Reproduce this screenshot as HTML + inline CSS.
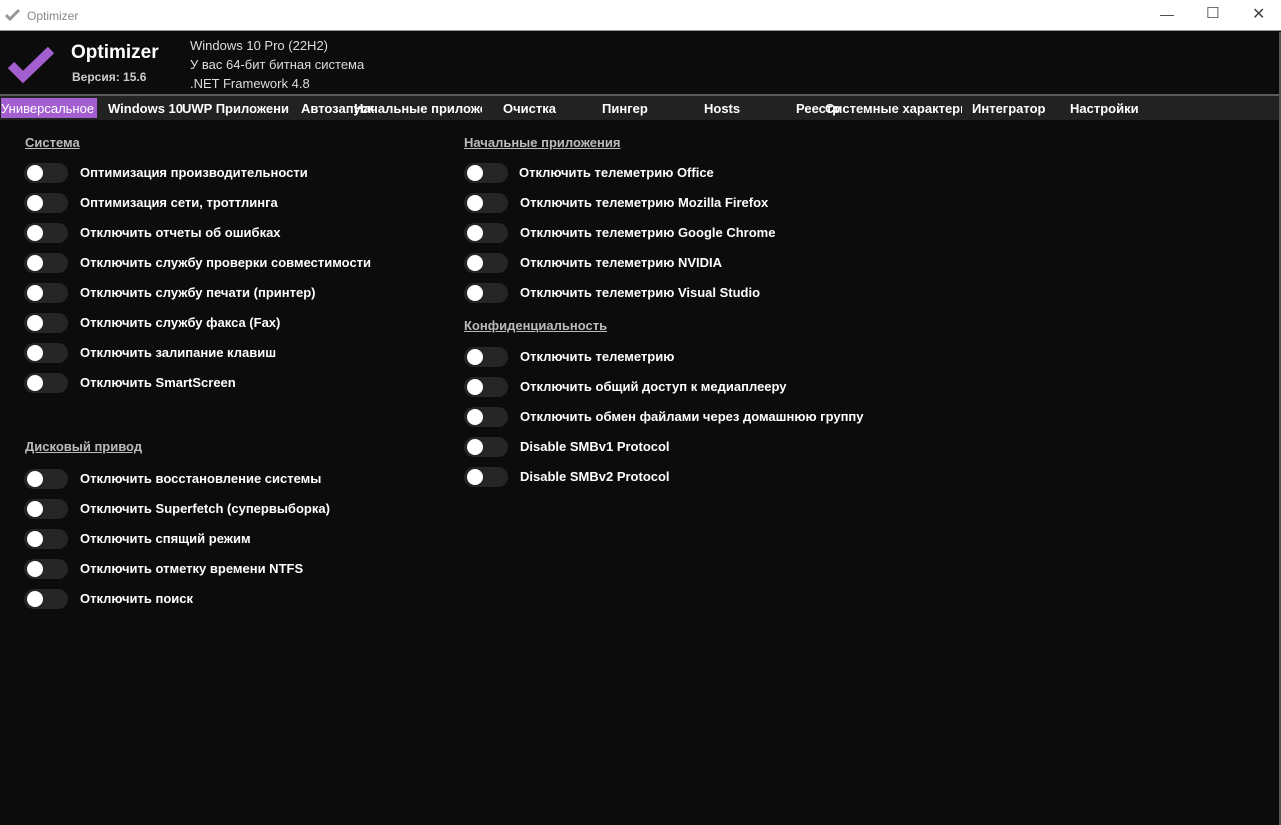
<!DOCTYPE html>
<html><head><meta charset="utf-8"><style>
*{margin:0;padding:0;box-sizing:border-box}
body{width:1281px;height:825px;background:#0c0c0c;font-family:"Liberation Sans","DejaVu Sans",sans-serif;color:#fff;position:relative;overflow:hidden}
.tb{position:absolute;left:0;top:0;width:1281px;height:31px;background:#fff;border-bottom:1px solid #999}
.tb .t{position:absolute;left:27px;top:9px;font-size:12px;color:#888}
.ctl{position:absolute;top:6px;font-size:14px;color:#444}
.hdr{position:absolute;left:0;top:32px;width:1281px;height:62px;background:#0c0c0c}
.gl{position:absolute;left:0;top:94px;width:1281px;height:2px;background:#5a5a5a}
.tabs{position:absolute;left:0;top:96px;width:1280px;height:24px;background:#222}
.tab{position:absolute;top:5px;font-size:13px;font-weight:bold;white-space:nowrap;color:#fff}
.a{position:absolute;font-size:13px;font-weight:bold;white-space:nowrap}
.h{position:absolute;font-size:13px;font-weight:bold;color:#bbb;text-decoration:underline}
.sw{position:absolute;width:44px;height:20px;border-radius:10px;background:#262626}
.sw:after{content:"";position:absolute;left:3px;top:2px;width:16px;height:16px;border-radius:50%;background:#fff}
.rb{position:absolute;right:0;top:32px;width:2px;height:793px;background:#555}
</style></head><body>
<div class="tb">
<svg style="position:absolute;left:5px;top:8px" width="16" height="14" viewBox="0 0 16 14"><path d="M1 7l4 4 9-9" stroke="#999" stroke-width="3" fill="none"/></svg>
<span class="t">Optimizer</span>
<span class="ctl" style="left:1160px">—</span>
<span class="ctl" style="left:1206px;top:4px;font-size:15px">☐</span>
<span class="ctl" style="left:1252px;top:4px;font-size:16px">✕</span>
</div>
<div class="hdr">
<svg style="position:absolute;left:8px;top:15px" width="46" height="38" viewBox="0 0 46 38"><path d="M3 18l12 12L43 3" stroke="#a35fd0" stroke-width="9" fill="none"/></svg>
<div class="a" style="left:71px;top:10px;font-size:19px">Optimizer</div>
<div class="a" style="left:72px;top:38px;font-size:12px;color:#ccc">Версия: 15.6</div>
<div class="a" style="left:190px;top:6px;font-size:13px;font-weight:normal;color:#ddd">Windows 10 Pro (22H2)</div>
<div class="a" style="left:190px;top:25px;font-size:13px;font-weight:normal;color:#ddd">У вас 64-бит битная система</div>
<div class="a" style="left:190px;top:44px;font-size:13px;font-weight:normal;color:#ddd">.NET Framework 4.8</div>
</div>
<div class="gl"></div>
<div class="tabs">
<div style="position:absolute;left:1px;top:2px;width:96px;height:20px;background:#a35fd0"></div>
<span class="tab" style="left:1px;font-weight:normal">Универсальное</span>
<span class="tab" style="left:108px">Windows 10</span>
<span class="tab" style="left:182px">UWP Приложени</span>
<span class="tab" style="left:301px">Автозапуск</span>
<span class="tab" style="left:354px;width:128px;overflow:hidden">Начальные приложения</span>
<span class="tab" style="left:503px">Очистка</span>
<span class="tab" style="left:602px">Пингер</span>
<span class="tab" style="left:704px">Hosts</span>
<span class="tab" style="left:796px">Реестр</span>
<span class="tab" style="left:825px;width:137px;overflow:hidden">Системные характеристики</span>
<span class="tab" style="left:972px">Интегратор</span>
<span class="tab" style="left:1070px">Настройки</span>
</div>
<div class="rb"></div>

<div class="h" style="left:25px;top:135px">Система</div>
<div class="h" style="left:25px;top:439px">Дисковый привод</div>
<div class="h" style="left:464px;top:135px">Начальные приложения</div>
<div class="h" style="left:464px;top:318px">Конфиденциальность</div>

<div class="sw" style="left:24px;top:163px"></div><div class="a" style="left:80px;top:165px">Оптимизация производительности</div>
<div class="sw" style="left:24px;top:193px"></div><div class="a" style="left:80px;top:195px">Оптимизация сети, троттлинга</div>
<div class="sw" style="left:24px;top:223px"></div><div class="a" style="left:80px;top:225px">Отключить отчеты об ошибках</div>
<div class="sw" style="left:24px;top:253px"></div><div class="a" style="left:80px;top:255px">Отключить службу проверки совместимости</div>
<div class="sw" style="left:24px;top:283px"></div><div class="a" style="left:80px;top:285px">Отключить службу печати (принтер)</div>
<div class="sw" style="left:24px;top:313px"></div><div class="a" style="left:80px;top:315px">Отключить службу факса (Fax)</div>
<div class="sw" style="left:24px;top:343px"></div><div class="a" style="left:80px;top:345px">Отключить залипание клавиш</div>
<div class="sw" style="left:24px;top:373px"></div><div class="a" style="left:80px;top:375px">Отключить SmartScreen</div>

<div class="sw" style="left:24px;top:469px"></div><div class="a" style="left:80px;top:471px">Отключить восстановление системы</div>
<div class="sw" style="left:24px;top:499px"></div><div class="a" style="left:80px;top:501px">Отключить Superfetch (супервыборка)</div>
<div class="sw" style="left:24px;top:529px"></div><div class="a" style="left:80px;top:531px">Отключить спящий режим</div>
<div class="sw" style="left:24px;top:559px"></div><div class="a" style="left:80px;top:561px">Отключить отметку времени NTFS</div>
<div class="sw" style="left:24px;top:589px"></div><div class="a" style="left:80px;top:591px">Отключить поиск</div>

<div class="sw" style="left:464px;top:163px"></div><div class="a" style="left:519px;top:165px">Отключить телеметрию Office</div>
<div class="sw" style="left:464px;top:193px"></div><div class="a" style="left:520px;top:195px">Отключить телеметрию Mozilla Firefox</div>
<div class="sw" style="left:464px;top:223px"></div><div class="a" style="left:520px;top:225px">Отключить телеметрию Google Chrome</div>
<div class="sw" style="left:464px;top:253px"></div><div class="a" style="left:520px;top:255px">Отключить телеметрию NVIDIA</div>
<div class="sw" style="left:464px;top:283px"></div><div class="a" style="left:520px;top:285px">Отключить телеметрию Visual Studio</div>

<div class="sw" style="left:464px;top:347px"></div><div class="a" style="left:520px;top:349px">Отключить телеметрию</div>
<div class="sw" style="left:464px;top:377px"></div><div class="a" style="left:520px;top:379px">Отключить общий доступ к медиаплееру</div>
<div class="sw" style="left:464px;top:407px"></div><div class="a" style="left:520px;top:409px">Отключить обмен файлами через домашнюю группу</div>
<div class="sw" style="left:464px;top:437px"></div><div class="a" style="left:520px;top:439px">Disable SMBv1 Protocol</div>
<div class="sw" style="left:464px;top:467px"></div><div class="a" style="left:520px;top:469px">Disable SMBv2 Protocol</div>
</body></html>
